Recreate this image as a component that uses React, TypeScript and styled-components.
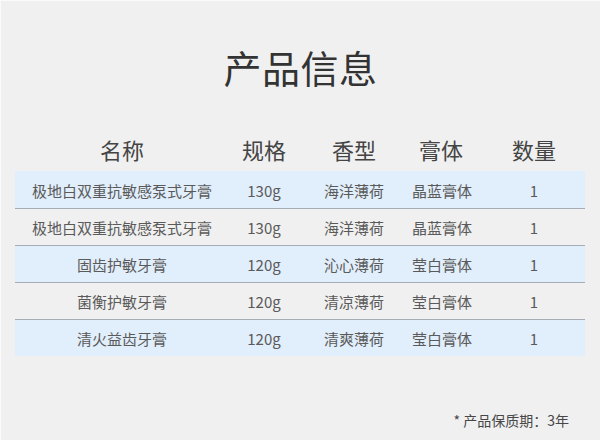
import React from "react";
import styled, { createGlobalStyle } from "styled-components";

const GlobalStyle = createGlobalStyle`
  html, body {
    margin: 0;
    padding: 0;
    background: #f0f0f0;
  }
  * { box-sizing: border-box; }
`;

const Page = styled.div`
  width: 600px;
  height: 440px;
  background: #f0f0f0;
  border-top: 1px solid #fbfbfb;
  border-left: 1px solid #fbfbfb;
  display: flex;
  flex-direction: column;
  font-family: "Noto Sans CJK SC", "Noto Sans", sans-serif;
  overflow: hidden;
`;

const Title = styled.h1`
  margin: 46px 0 0;
  font-size: 38px;
  line-height: 40px;
  font-weight: 400;
  color: #333333;
  text-align: center;
  letter-spacing: 0.5px;
`;

const Table = styled.div`
  margin: 46px 15px 0 14px;
  display: flex;
  flex-direction: column;
`;

const Grid = styled.div<{ $striped?: boolean; $divider?: boolean; $header?: boolean }>`
  display: grid;
  grid-template-columns: 214px 70px 110px 64px 1fr;
  align-items: center;
  height: ${(p) => (p.$header ? "32px" : "37px")};
  margin-bottom: ${(p) => (p.$header ? "6px" : "0")};
  background: ${(p) => (p.$striped ? "#e1eefb" : "transparent")};
  border-top: ${(p) => (p.$divider ? "1.5px solid #a7adb4" : "none")};
`;

const HeadCell = styled.div<{ $shift?: number }>`
  text-align: center;
  font-size: 22px;
  line-height: 30px;
  color: #444444;
  font-weight: 400;
  padding-left: ${(p) => p.$shift ?? 0}px;
`;

const Cell = styled.div<{ $shift?: number }>`
  text-align: center;
  font-size: 15px;
  line-height: 20px;
  color: #5a5a5a;
  padding-top: 2px;
  padding-left: ${(p) => p.$shift ?? 0}px;
  white-space: nowrap;
`;

const Footer = styled.div`
  margin-top: auto;
  padding: 0 31px 10px 0;
  text-align: right;
  font-size: 14px;
  line-height: 20px;
  color: #474747;
`;

const headers = ["名称", "规格", "香型", "膏体", "数量"];
const shifts = [0, 0, -2, 2, 10];

const rows: string[][] = [
  ["极地白双重抗敏感泵式牙膏", "130g", "海洋薄荷", "晶蓝膏体", "1"],
  ["极地白双重抗敏感泵式牙膏", "130g", "海洋薄荷", "晶蓝膏体", "1"],
  ["固齿护敏牙膏", "120g", "沁心薄荷", "莹白膏体", "1"],
  ["菌衡护敏牙膏", "120g", "清凉薄荷", "莹白膏体", "1"],
  ["清火益齿牙膏", "120g", "清爽薄荷", "莹白膏体", "1"],
];

export default function App() {
  return (
    <>
      <GlobalStyle />
      <Page>
        <Title>产品信息</Title>
        <Table>
          <Grid $header>
            {headers.map((h, i) => (
              <HeadCell key={h} $shift={i === 4 ? 10 : 0}>
                {h}
              </HeadCell>
            ))}
          </Grid>
          {rows.map((r, ri) => (
            <Grid key={ri} $striped={ri % 2 === 0} $divider={ri > 0}>
              {r.map((c, ci) => (
                <Cell key={ci} $shift={shifts[ci]}>
                  {c}
                </Cell>
              ))}
            </Grid>
          ))}
        </Table>
        <Footer>* 产品保质期：3年</Footer>
      </Page>
    </>
  );
}
